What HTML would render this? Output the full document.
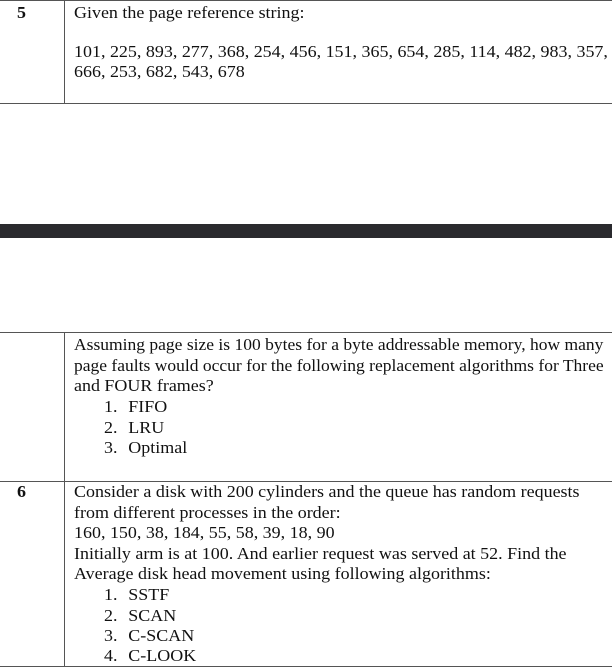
<!DOCTYPE html>
<html><head><style>
body{margin:0;width:612px;height:670px;background:#fff;position:relative;overflow:hidden;font-family:"Liberation Serif","Times New Roman",serif;font-size:17px;color:#111}
.h{position:absolute;left:0;width:612px;height:1px;background:#555}
.v{position:absolute;left:64px;width:1px;background:#555}
.t{position:absolute;white-space:nowrap;line-height:20px;transform:scaleX(1.057);transform-origin:0 0}
.t.s{transform:scaleX(1.03)}
.b{font-weight:bold}
.n{display:inline-block;width:23px}
</style></head><body>
<div class="h" style="top:0"></div>
<div class="h" style="top:103px"></div>
<div class="v" style="top:0;height:104px"></div>
<div class="t b" style="left:17px;top:3px">5</div>
<div class="t" style="left:74px;top:3px">Given the page reference string:</div>
<div class="t" style="left:74px;top:42px">101, 225, 893, 277, 368, 254, 456, 151, 365, 654, 285, 114, 482, 983, 357,</div>
<div class="t" style="left:74px;top:62px">666, 253, 682, 543, 678</div>

<div style="position:absolute;left:0;top:224px;width:612px;height:14px;background:#2a2a2e"></div>

<div class="h" style="top:332px"></div>
<div class="h" style="top:481px"></div>
<div class="h" style="top:666px"></div>
<div class="v" style="top:332px;height:335px"></div>
<div class="t s" style="left:74px;top:335px">Assuming page size is 100 bytes for a byte addressable memory, how many</div>
<div class="t s" style="left:74px;top:355.5px">page faults would occur for the following replacement algorithms for Three</div>
<div class="t" style="left:74px;top:376px">and FOUR frames?</div>
<div class="t" style="left:104px;top:397px"><span class="n">1.</span>FIFO</div>
<div class="t" style="left:104px;top:418px"><span class="n">2.</span>LRU</div>
<div class="t" style="left:104px;top:438px"><span class="n">3.</span>Optimal</div>

<div class="t b" style="left:17px;top:482px">6</div>
<div class="t" style="left:74px;top:482px">Consider a disk with 200 cylinders and the queue has random requests</div>
<div class="t" style="left:74px;top:502.5px">from different processes in the order:</div>
<div class="t" style="left:74px;top:523px">160, 150, 38, 184, 55, 58, 39, 18, 90</div>
<div class="t" style="left:74px;top:543.5px">Initially arm is at 100. And earlier request was served at 52. Find the</div>
<div class="t" style="left:74px;top:564px">Average disk head movement using following algorithms:</div>
<div class="t" style="left:104px;top:585px"><span class="n">1.</span>SSTF</div>
<div class="t" style="left:104px;top:605.5px"><span class="n">2.</span>SCAN</div>
<div class="t" style="left:104px;top:626px"><span class="n">3.</span>C-SCAN</div>
<div class="t" style="left:104px;top:646px"><span class="n">4.</span>C-LOOK</div>
</body></html>
